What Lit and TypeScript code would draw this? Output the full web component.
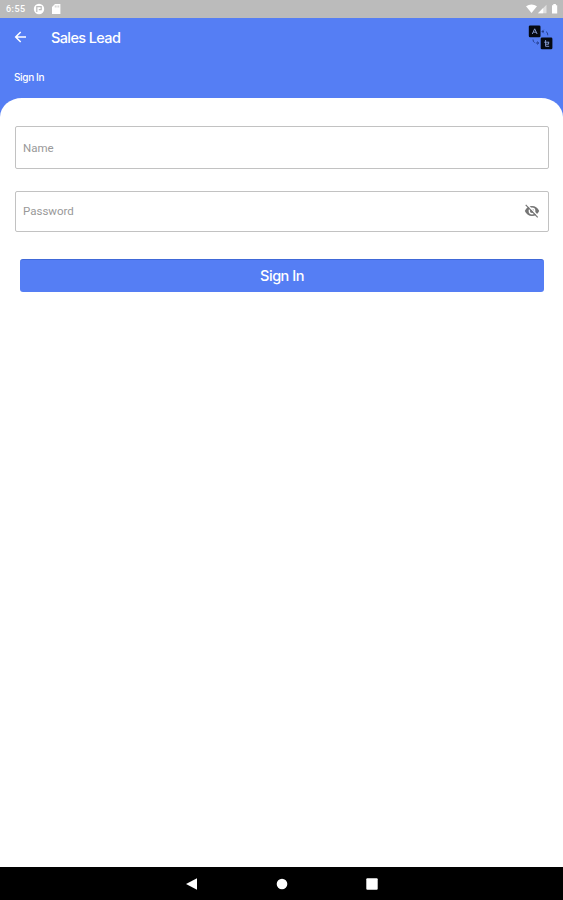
import { LitElement, html, css } from "lit";
import { customElement } from "lit/decorators.js";

@customElement("app-root")
export class AppRoot extends LitElement {
  static styles = css`
    :host {
      display: flex;
      flex-direction: column;
      height: 900px;
      background: #557ef4;
      font-family: Inter, "Liberation Sans", sans-serif;
      color: #fff;
      overflow: hidden;
    }
    * { box-sizing: border-box; }
    svg { display: block; flex: none; }
    .status {
      height: 18px;
      flex: none;
      background: #bbb;
      display: flex;
      align-items: center;
      padding: 0 4px 0 6px;
      font: 500 9px Roboto, sans-serif;
    }
    .clock { width: 27px; letter-spacing: 0.5px; }
    .disc { margin-right: 7px; }
    .spacer { flex: 1; }
    .bar {
      height: 38px;
      flex: none;
      display: flex;
      align-items: center;
      padding: 0 10px 0 14px;
    }
    .title {
      margin: 0 0 0 24px;
      font-size: 14.5px;
      font-weight: 500;
      letter-spacing: -0.62px;
      flex: 1;
    }
    .sub {
      height: 42px;
      flex: none;
      padding: 14px 14px 0;
      font-size: 10px;
      line-height: 14px;
      font-weight: 500;
      letter-spacing: -0.35px;
    }
    .sheet {
      flex: 1;
      background: #fff;
      border-radius: 22px 22px 0 0 / 19px 19px 0 0;
      padding: 28px 14px 0 15px;
      display: flex;
      flex-direction: column;
    }
    .field {
      height: 43px;
      flex: none;
      border: 1px solid #c2c2c2;
      border-radius: 2px;
      display: flex;
      align-items: center;
      justify-content: space-between;
      padding: 0 8px 0 7px;
      margin-bottom: 22px;
      color: #999;
      font: 11.5px Roboto, sans-serif;
    }
    .password { height: 41px; margin-bottom: 27px; padding-bottom: 2px; }
    .submit {
      height: 33px;
      flex: none;
      margin: 0 5px;
      padding: 0 0 2px;
      border: 0;
      border-top: 1px solid #4069d8;
      border-radius: 3px;
      background: #557ef4;
      color: #fff;
      font: 500 14.5px Inter, sans-serif;
      letter-spacing: -0.5px;
    }
    .nav {
      height: 33px;
      flex: none;
      background: #000;
      display: flex;
      justify-content: center;
      align-items: center;
      gap: 78px;
    }
  `;

  render() {
    return html`
      <div class="status">
        <span class="clock">6:55</span>
        <svg class="disc" width="12" height="12" viewBox="0 0 12 12">
          <circle cx="6" cy="6" r="5.2" fill="#fff" />
          <path d="M3.8 9V3.7h4.4v3H5.8" fill="none" stroke="#bbb" stroke-width="1.2" />
        </svg>
        <svg width="9" height="10" viewBox="0 0 9 10">
          <path d="M3 0h5.4v10H0V3z" fill="#fff" />
          <path d="M3.3 1.5v2M5 1.5v2M6.7 1.5v2" stroke="#bbb" stroke-width=".7" />
        </svg>
        <span class="spacer"></span>
        <svg width="33" height="10" viewBox="0 0 33 10">
          <path d="M0 2.3Q5.5-1.4 11 2.3L5.5 9z" fill="#fff" />
          <path d="M12 9.2L20.5.8v8.4z" fill="#fff" opacity=".55" />
          <path d="M12 9.2l5.2-5.1v5.1z" fill="#fff" />
          <path d="M26 1.2h1.3V0h2.6v1.2h1.3v8.3H26z" fill="#fff" />
        </svg>
      </div>

      <header class="bar">
        <svg width="13" height="12" viewBox="0 0 13 12" fill="none" stroke="#fff" stroke-width="1.5">
          <path d="M12 6H2M6.7 1L1.7 6l5 5" />
        </svg>
        <h1 class="title">Sales Lead</h1>
        <svg width="25" height="25" viewBox="0 0 25 25">
          <rect x=".8" y=".5" width="11.7" height="11.8" rx="1.3" fill="#050912" />
          <rect x="12.7" y="12.5" width="11.7" height="11.8" rx="1.3" fill="#050912" />
          <path d="M4.3 9L6.7 3.8 9.1 9M5.3 7.2h2.8" fill="none" stroke="#8fa5dc" stroke-width=".9" />
          <path d="M16.2 17.2h5M17.6 15v6.3h3.6M17.6 19.2h3v-2" fill="none" stroke="#8fa5dc" stroke-width=".9" />
          <path d="M15.7 4.8L14 6.5l1.7 1.7M14 6.5h2M18 6.7q1.8.3 1.8 3.6M5 14.5q0 2.5 1.6 3M7.8 18h3M9 16.5l1.7 1.5L9 19.5" fill="none" stroke="#213b88" stroke-width=".9" />
        </svg>
      </header>

      <div class="sub">Sign In</div>

      <main class="sheet">
        <div class="field">Name</div>
        <div class="field password">
          <span>Password</span>
          <svg width="16" height="14" viewBox="0 0 16 14" fill="none">
            <path d="M.8 7Q3.2 2 8 2t7.2 5Q12.8 12 8 12T.8 7z" fill="#757575" />
            <circle cx="8" cy="7" r="3.4" fill="#fff" />
            <circle cx="8" cy="7" r="2.1" fill="#757575" />
            <path d="M2.8.2l12 12.6" stroke="#fff" stroke-width="1.4" />
            <path d="M1.7.8l12 12.6" stroke="#757575" stroke-width="1.2" />
          </svg>
        </div>
        <button class="submit">Sign In</button>
      </main>

      <nav class="nav">
        <svg width="12" height="12" viewBox="0 0 12 12"><path d="M0 6L11 .2v11.6z" fill="#fff" /></svg>
        <svg width="12" height="12" viewBox="0 0 12 12"><circle cx="6" cy="6" r="5.3" fill="#fff" /></svg>
        <svg width="12" height="12" viewBox="0 0 12 12"><rect x=".3" y=".3" width="11.4" height="11.4" rx="1" fill="#fff" /></svg>
      </nav>
    `;
  }
}
